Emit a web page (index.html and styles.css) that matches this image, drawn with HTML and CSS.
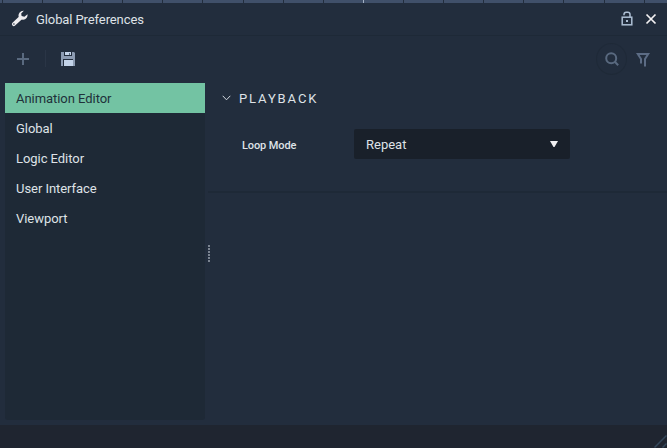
FILE: index.html
```html
<!DOCTYPE html>
<html lang="en">
<head>
<meta charset="utf-8">
<title>Global Preferences</title>
<link rel="stylesheet" href="styles.css">
</head>
<body>
<div class="window">
  <svg class="ruler" width="667" height="3" viewBox="0 0 667 3"><path d="M2.5 0v3M42.5 0v3M82.5 0v3M122.5 0v3M162.5 0v3M202.5 0v3M243.5 0v3M283.5 0v3M323.5 0v3M403.5 0v3M443.5 0v3M483.5 0v3M523.5 0v3M563.5 0v3M604.5 0v3M644.5 0v3" stroke="#222d3d"/><path d="M363.5 0v3" stroke="#a4b1c4"/></svg>
  <header class="titlebar">
    <svg class="wrench" width="17" height="17" viewBox="0 0 17 17"><path d="M2.8 14.2 9.4 8" stroke="#efedf0" stroke-width="3.8" stroke-linecap="round"/><path d="M12.8.7A4.8 4.8 0 0 0 7.7 6.8 4.7 4.7 0 0 0 12.2 9.7 4.7 4.7 0 0 0 16.5 4.2L13.4 6.7 10.6 5.9 10.2 3.4Z" fill="#efedf0"/><circle cx="2.9" cy="14" r=".8" fill="#222d3d"/></svg>
    <h1>Global Preferences</h1>
    <svg class="lock" width="12" height="15" viewBox="0 0 12 15" fill="none" stroke="#aebfd4" stroke-width="1.5"><path d="M3 4.2V3.5Q3 1.3 5.2 1.3H6.8Q9 1.3 9 3.5V6"/><rect x="1.2" y="6.2" width="9.6" height="7.6"/><rect x="5" y="9" width="2" height="2" fill="#aebfd4" stroke="none"/></svg>
    <svg class="close" width="12" height="12" viewBox="0 0 12 12"><path d="m1.5 1.5 9 9m0-9-9 9" stroke="#f3f1f2" stroke-width="1.7"/></svg>
  </header>
  <div class="toolbar">
    <svg class="plus" width="12" height="12" viewBox="0 0 12 12"><path d="M6 0v12M0 6h12" stroke="#59697f" stroke-width="2"/></svg>
    <span class="separator"></span>
    <svg class="save" width="14" height="14" viewBox="0 0 14 14"><path d="M0 0h13l1 1v13H0z" fill="#8c9bb2"/><path d="M3 0h8v4H3zM2 7h10v7H2z" fill="#222d3d"/><path d="M4 0h6v3H4zM3 8h9v6H3z" fill="#c3d3e9"/><path d="M8 1h1v2H8z" fill="#59697f"/></svg>
    <span class="search"><svg width="14" height="14" viewBox="0 0 14 14" fill="none" stroke="#59697f" stroke-width="2"><circle cx="6.2" cy="6.2" r="5"/><path d="m9.8 9.8 3.4 3.4"/></svg></span>
    <svg class="filter" width="15" height="15" viewBox="0 0 15 15" fill="none" stroke="#5c6c85" stroke-width="2"><path d="M5 11.5V7L1.8 2H12.2L9 7V14.5"/></svg>
  </div>
  <main>
    <nav>
      <div class="item selected">Animation Editor</div>
      <div class="item">Global</div>
      <div class="item">Logic Editor</div>
      <div class="item">User Interface</div>
      <div class="item">Viewport</div>
    </nav>
    <svg class="grip" width="2" height="17" viewBox="0 0 2 17"><path d="M1 0v17" stroke="#7b8491" stroke-width="2" stroke-dasharray="2 1"/></svg>
    <section>
      <div class="heading">
        <svg width="9" height="6" viewBox="0 0 9 6"><path d="m.7.8 3.8 4 3.8-4" fill="none" stroke="#d3d9e0"/></svg>
        <h2>PLAYBACK</h2>
      </div>
      <div class="row">
        <span class="label">Loop Mode</span>
        <div class="select"><span>Repeat</span><svg width="8" height="6" viewBox="0 0 8 6"><path d="M0 0h8L4.5 6h-1z" fill="#f0eff1"/></svg></div>
      </div>
    </section>
  </main>
  <footer><svg width="13" height="13" viewBox="0 0 13 13"><path d="m.5 12.5 12-12m-4 12 4-4" stroke="#34485c" stroke-width="1.5"/></svg></footer>
</div>
</body>
</html>
```
FILE: styles.css
```css
* { box-sizing: border-box; }
body { margin: 0; overflow: hidden; font: 13px/16px Roboto, "Liberation Sans", sans-serif; color: #dfe2e7; }
svg { display: block; flex: none; }
h1, h2 { margin: 0; font-size: 13px; font-weight: 400; white-space: nowrap; }
.window { display: flex; flex-direction: column; width: 667px; height: 448px; background: #222d3d; }
.ruler { background: #40506a; }
.titlebar { display: flex; align-items: center; height: 33px; padding: 0 10px 0 11px; border-bottom: 1px solid #1e2937; }
.wrench { margin: -1px 8px 0 0; }
.titlebar h1 { flex: 1; padding-top: 2px; letter-spacing: -0.1px; }
.lock { margin: -1px 12px 0 0; }
.toolbar { display: flex; align-items: center; height: 47px; padding: 0 16px 2px 17px; }
.separator { width: 1px; height: 17px; margin: 0 15px 0 16px; background: #2a3546; }
.search { display: flex; align-items: center; justify-content: center; width: 31px; height: 32px; margin-left: auto; border: 1px solid #1f2a38; border-radius: 50%; }
.filter { margin: 2px 0 0 9px; }
main { display: flex; height: 342px; padding: 0 0 5px 5px; }
nav { width: 200px; background: #1e2936; border-radius: 3px; }
.item { height: 30px; padding: 8px 11px 6px; letter-spacing: -0.05px; }
.selected { background: #73c3a3; color: #20313a; }
.grip { margin: 162px 0 0 3px; }
section { flex: 1; height: 110px; margin-left: -2px; border-bottom: 2px solid #1e2937; }
.heading { display: flex; align-items: center; height: 30px; padding-left: 14px; }
.heading h2 { margin-left: 8px; padding-top: 2px; letter-spacing: 1.9px; }
.row { display: flex; align-items: center; height: 30px; margin: 16px 0 0 34px; }
.label { width: 112px; padding-top: 4px; font-size: 11px; font-weight: 500; letter-spacing: -0.1px; }
.select { display: flex; align-items: center; justify-content: space-between; width: 216px; height: 30px; padding: 0 12px; background: #19202a; border-radius: 2px; }
.select span { padding-top: 2px; }
footer { display: flex; align-items: flex-end; justify-content: flex-end; height: 23px; background: #1f2530; }
```
